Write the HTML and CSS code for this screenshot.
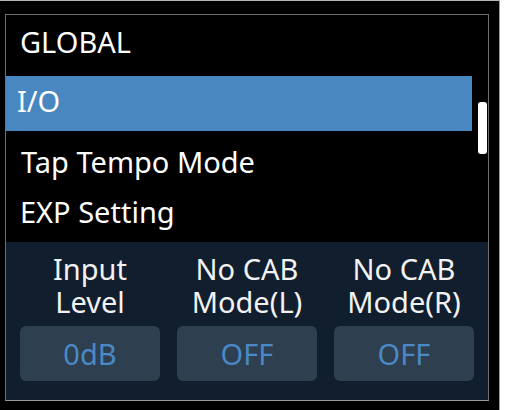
FILE: index.html
```html
<!DOCTYPE html>
<html lang="en">
  <head>
    <meta charset="UTF-8" />
    <meta name="viewport" content="width=device-width, initial-scale=1.0" />
    <title>Global I/O</title>
    <link rel="stylesheet" href="styles.css">
  </head>
  <body>
    <div class="device">
      <div class="screen">
        <div class="menu">
          <div class="menu-list">
            <div class="menu-title">GLOBAL</div>
            <div class="menu-item selected">I/O</div>
            <div class="menu-item after-selected">Tap Tempo Mode</div>
            <div class="menu-item">EXP Setting</div>
          </div>
          <div class="scroll-track">
            <div class="scroll-thumb"></div>
          </div>
        </div>

        <div class="params">
          <div class="param">
            <div class="param-label">
              <span class="label-line">Input</span>
              <span class="label-line">Level</span>
            </div>
            <div class="param-value">0dB</div>
          </div>
          <div class="param">
            <div class="param-label">
              <span class="label-line">No CAB</span>
              <span class="label-line">Mode(L)</span>
            </div>
            <div class="param-value">OFF</div>
          </div>
          <div class="param">
            <div class="param-label">
              <span class="label-line">No CAB</span>
              <span class="label-line">Mode(R)</span>
            </div>
            <div class="param-value">OFF</div>
          </div>
        </div>
      </div>
    </div>
  </body>
</html>
```

FILE: styles.css
```css
body {
  margin: 0;
  background: #ffffff;
  font-family: "Noto Sans", "Open Sans", sans-serif;
}

.device {
  width: 494px;
  height: 396px;
  background: #000000;
  border-top: 1px solid #b8b8b8;
  border-right: 1px solid #9a9a9a;
  padding: 13px 0 0 5px;
}

.screen {
  width: 482px;
  height: 385px;
  border: 1px solid #6e6e6e;
  border-bottom-color: #9a9a9a;
  display: flex;
  flex-direction: column;
}

.menu {
  height: 227px;
  display: flex;
  flex-direction: row;
}

.menu-list {
  width: 466px;
  padding-top: 2px;
  color: #ffffff;
  font-size: 29px;
}

.menu-title {
  height: 50px;
  line-height: 50px;
  padding-left: 14px;
  margin-bottom: 9px;
}

.menu-item {
  height: 50px;
  line-height: 50px;
  padding-left: 14px;
}

.menu-item.selected {
  background: #4887bf;
  padding-left: 11px;
  padding-bottom: 5px;
}

.menu-item.after-selected {
  margin-top: 6px;
  padding-left: 15px;
}

.scroll-track {
  width: 16px;
}

.scroll-thumb {
  width: 9px;
  height: 52px;
  margin: 87px 0 0 6px;
  background: #ffffff;
  border-radius: 3px;
}

.params {
  flex: 1;
  background: #111e2d;
  display: flex;
  flex-direction: row;
  gap: 17px;
  padding: 10px 14px 0 14px;
}

.param {
  width: 140px;
  display: flex;
  flex-direction: column;
  align-items: center;
}

.param-label {
  color: #f2f2f2;
  font-size: 29px;
  text-align: center;
}

.label-line {
  display: block;
  height: 33px;
  line-height: 33px;
  white-space: nowrap;
}

.param-value {
  margin-top: 8px;
  width: 140px;
  height: 55px;
  line-height: 55px;
  background: #2e3f50;
  border-radius: 6px;
  color: #4a89c6;
  font-size: 29px;
  text-align: center;
}
```
